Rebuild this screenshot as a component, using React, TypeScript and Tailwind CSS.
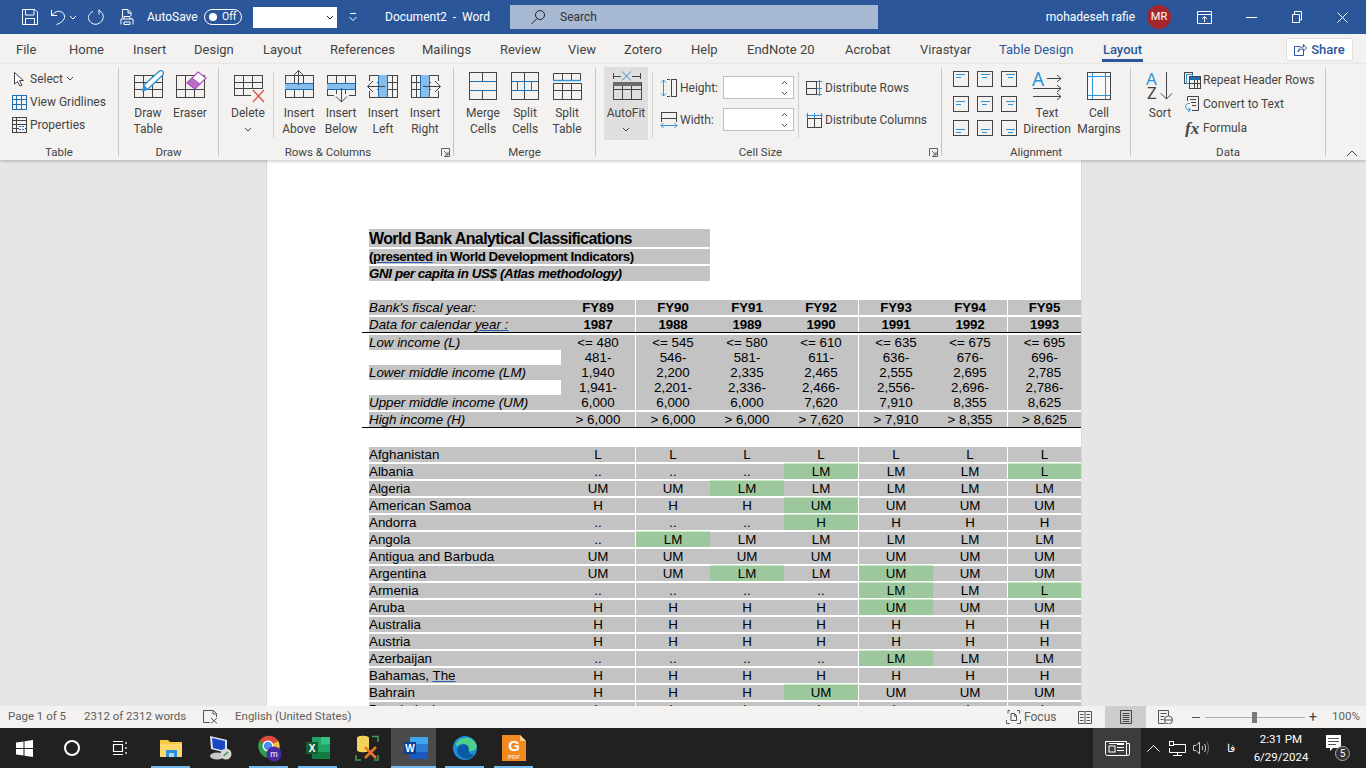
import type { ReactNode } from "react";

const DK = "#444444";
const BL = "#1f6fb4";
const LB = "#86bdea";
const SKY = "#2b94d8";

function Ico({ w = 36, h = 36, children }: { w?: number; h?: number; children: ReactNode }) {
  return (
    <svg width={w} height={h} viewBox={`0 0 ${w} ${h}`} fill="none" className="block shrink-0">
      {children}
    </svg>
  );
}

function Grid({ x, y, w, h, cols = [], rows = [], c = DK }: { x: number; y: number; w: number; h: number; cols?: number[]; rows?: number[]; c?: string }) {
  return (
    <g stroke={c}>
      <rect x={x + 0.5} y={y + 0.5} width={w} height={h} />
      {cols.map((v) => (
        <path key={"c" + v} d={`M${v + 0.5} ${y}V${y + h}`} />
      ))}
      {rows.map((v) => (
        <path key={"r" + v} d={`M${x} ${v + 0.5}H${x + w}`} />
      ))}
    </g>
  );
}

const DrawTableIcon = () => (
  <Ico>
    <Grid x={4} y={7} w={28} h={22} cols={[13, 22]} rows={[14, 21]} />
    <path d="M14 17 29 3.500a2.400 2.400 0 0 1 3.800 3.400L18 21l-5 2z" fill="#fff" stroke={SKY} strokeWidth="1.400" />
    <path d="M14 17l4 4-5 2z" fill={SKY} />
  </Ico>
);
const EraserIcon = () => (
  <Ico>
    <Grid x={4} y={7} w={28} h={22} cols={[13, 22]} rows={[21]} />
    <path d="M15 15 26 4l8 6-11 11z" fill="#fff" stroke="#a94fbd" strokeWidth="1.200" />
    <path d="M15 15l5-5 8 6-5 5z" fill="#b86bc9" stroke="#a94fbd" />
  </Ico>
);
const DeleteIcon = () => (
  <Ico>
    <Grid x={4} y={7} w={28} h={20} cols={[13, 22]} rows={[14, 20]} />
    <rect x="21" y="21" width="14" height="14" fill="#f3f2f1" />
    <path d="M23 22 34 34M34 22 23 34" stroke="#e8403c" strokeWidth="1.200" />
  </Ico>
);
const InsertAboveIcon = () => (
  <Ico>
    <Grid x={4} y={7} w={28} h={22} cols={[13, 22]} />
    <rect x="4" y="15" width="28" height="7" fill={LB} />
    <path d="M4 15.500H32M4 21.500H32" stroke={BL} />
    <rect x="10" y="1" width="15" height="6" fill="#f3f2f1" />
    <path d="M17.500 17V2.500M12 8l5.500-5.500L23 8" stroke={DK} />
  </Ico>
);
const InsertBelowIcon = () => (
  <Ico>
    <Grid x={4} y={7} w={28} h={20} cols={[13, 22]} />
    <rect x="4" y="15" width="28" height="7" fill={LB} />
    <path d="M4 15.500H32M4 21.500H32" stroke={BL} />
    <rect x="11" y="26" width="15" height="9" fill="#f3f2f1" />
    <path d="M18.500 20V34M13 28.500l5.500 5.500 5.500-5.500" stroke={DK} />
  </Ico>
);
const InsertLeftIcon = () => (
  <Ico>
    <Grid x={4} y={7} w={28} h={22} rows={[14, 21]} cols={[27]} />
    <rect x="13" y="7" width="9" height="22" fill={LB} />
    <path d="M13.500 7V29M22.500 7V29" stroke={BL} />
    <rect x="2" y="13" width="10" height="10" fill="#f3f2f1" />
    <path d="M20 18.500H2.500M8 13l-5.500 5.500L8 24" stroke={DK} />
  </Ico>
);
const InsertRightIcon = () => (
  <Ico>
    <Grid x={4} y={7} w={27} h={22} rows={[14, 21]} cols={[9]} />
    <rect x="13" y="7" width="9" height="22" fill={LB} />
    <path d="M13.500 7V29M22.500 7V29" stroke={BL} />
    <rect x="24" y="13" width="10" height="10" fill="#f3f2f1" />
    <path d="M16 18.500H33.500M28 13l5.500 5.500L28 24" stroke={DK} />
  </Ico>
);
const MergeIcon = () => (
  <Ico>
    <Grid x={4} y={4} w={27} h={27} />
    <path d="M17.500 4V13M17.500 22V31" stroke={DK} />
    <path d="M4 13.500H31M4 22.500H31" stroke={BL} />
  </Ico>
);
const SplitCellsIcon = () => (
  <Ico>
    <Grid x={4} y={4} w={27} h={27} />
    <path d="M17.500 4V13M17.500 22V31" stroke={DK} />
    <path d="M4 13.500H31M4 22.500H31M10.500 13V22M17.500 13V22M24.500 13V22" stroke={BL} />
  </Ico>
);
const SplitTableIcon = () => (
  <Ico>
    <path d="M4.500 12V5.500H31.500V12M13.500 5V12M22.500 5V12" stroke={DK} />
    <path d="M4 12.500H32" stroke={SKY} strokeWidth="1.400" />
    <Grid x={4} y={15} w={28} h={16} cols={[13, 22]} rows={[22]} />
  </Ico>
);
const AutoFitIcon = () => (
  <Ico>
    <path d="M5.500 5V11M5 8.500H13M32.500 5V11M24 8.500H33" stroke={DK} />
    <path d="M14 3.500 23 12.500M23 3.500 14 12.500" stroke={SKY} />
    <Grid x={5} y={14} w={28} h={17} cols={[14, 23]} rows={[21]} />
    <rect x="5" y="14" width="28" height="4" fill="#6b6b6b" />
  </Ico>
);
const HeightIcon = () => (
  <Ico w={18} h={20}>
    <path d="M3.500 2V18M1 4.500 3.500 2 6 4.500M1 15.500 3.500 18 6 15.500" stroke={SKY} />
    <path d="M7 1.500H10M7 18.500H10" stroke={DK} />
    <rect x="11.500" y="1.500" width="5" height="17" stroke={DK} />
  </Ico>
);
const WidthIcon = () => (
  <Ico w={18} h={18}>
    <rect x="1.500" y="1.500" width="15" height="6" stroke={DK} />
    <path d="M1.500 8V11M16.500 8V11" stroke={DK} />
    <path d="M1 14.500H17M3.500 12 1 14.500 3.500 17M14.500 12 17 14.500 14.500 17" stroke={SKY} />
  </Ico>
);
const DistRowsIcon = () => (
  <Ico w={17} h={16}>
    <rect x="0.500" y="1.500" width="10" height="13" stroke={DK} />
    <path d="M0 8.500H10" stroke={DK} />
    <path d="M13.500 0V16M11 1.500H16M11 8.500H16M11 14.500H16" stroke={SKY} />
  </Ico>
);
const DistColsIcon = () => (
  <Ico w={17} h={16}>
    <rect x="1.500" y="6.500" width="14" height="9" stroke={DK} />
    <path d="M8.500 6V16" stroke={DK} />
    <path d="M0 3.500H17M1.500 1V6M8.500 1V6M15.500 1V6" stroke={SKY} />
  </Ico>
);

function AlignIcon({ h, v }: { h: number; v: number }) {
  const x1 = h === 0 ? 3 : h === 1 ? 4 : 5;
  const x2 = h === 0 ? 10 : h === 1 ? 11 : 12;
  const x3 = h === 0 ? 3 : h === 1 ? 5 : 7;
  const x4 = h === 0 ? 8 : h === 1 ? 10 : 12;
  const y = v === 0 ? 3 : v === 1 ? 5 : 9;
  return (
    <Ico w={16} h={16}>
      <rect x="0.500" y="0.500" width="15" height="15" stroke={DK} />
      <path d={`M${x1} ${y + 0.5}H${x2 + 2}M${x3} ${y + 3.5}H${x4}`} stroke={SKY} />
    </Ico>
  );
}

const TextDirIcon = () => (
  <Ico w={30} h={36}>
    <text x="0" y="18" fontSize="19" fill={SKY} fontFamily="'Noto Sans', sans-serif">A</text>
    <path d="M15 10.500H29M25 7l4 3.500-4 3.500M1 20.500H29M25 17l4 3.500-4 3.500M1 28.500H29M25 25l4 3.500-4 3.500" stroke={DK} />
  </Ico>
);
const CellMarginsIcon = () => (
  <Ico w={26} h={36}>
    <rect x="1.500" y="4.500" width="23" height="27" stroke={DK} fill="#f9f9f9" />
    <path d="M6.500 5V31M19.500 5V31M2 8.500H24M2 27.500H24" stroke={SKY} />
  </Ico>
);
const SortIcon = () => (
  <Ico w={30} h={36}>
    <text x="1" y="17" fontSize="17" fill={SKY} fontFamily="'Noto Sans', sans-serif">A</text>
    <text x="2" y="31" fontSize="17" fill={DK} fontFamily="'Noto Sans', sans-serif">Z</text>
    <path d="M21.500 4V31M16 25.500l5.500 5.500 5.500-5.500" stroke={DK} />
  </Ico>
);
const RepeatIcon = () => (
  <Ico w={17} h={17}>
    <rect x="0.500" y="0.500" width="8" height="11" stroke={DK} />
    <rect x="2.500" y="2.500" width="6" height="9" stroke={SKY} />
    <rect x="5.500" y="4.500" width="11" height="12" stroke={DK} fill="#f3f2f1" />
    <rect x="6" y="5" width="10" height="3" fill={BL} />
    <path d="M6 11.500H16M10.500 8V16M13.500 8V16" stroke={DK} />
  </Ico>
);
const ConvertIcon = () => (
  <Ico w={17} h={17}>
    <path d="M3.500 5V0.500H14.500V14.500H8" stroke={DK} />
    <path d="M6 3.500H12M7 6.500H12M8 9.500H12" stroke={DK} />
    <path d="M6 7.500C2 6.500 0 11 3 13.500L6.500 14M4.500 11.500 6.500 14 4 16" stroke={SKY} />
  </Ico>
);
const FxIcon = () => (
  <Ico w={17} h={17}>
    <text x="1" y="14" fontSize="17" fontStyle="italic" fontWeight="700" fill={DK} fontFamily="'Liberation Serif', serif">fx</text>
  </Ico>
);
const Launcher = () => (
  <Ico w={9} h={9}>
    <path d="M0.500 8V0.500H8.500V8.500H3M3 3l4 4M4 7h3V4" stroke="#605e5c" />
  </Ico>
);
const Chevron = ({ c = "#444" }: { c?: string }) => (
  <Ico w={8} h={5}>
    <path d="M1 1l3 3 3-3" stroke={c} />
  </Ico>
);

function BigBtn({ icon, lines, w = "w-[42px]", chevron }: { icon: ReactNode; lines: string[]; w?: string; chevron?: boolean }) {
  return (
    <div className={`flex shrink-0 flex-col items-center ${w}`}>
      <div className="flex h-[37px] w-full justify-center">{icon}</div>
      {lines.map((l) => (
        <span key={l} className="whitespace-nowrap text-center leading-[16px]">{l}</span>
      ))}
      {chevron && <div className="mt-[6px]"><Chevron /></div>}
    </div>
  );
}

function Group({ w, label, launcher, children }: { w: string; label: string; launcher?: boolean; children: ReactNode }) {
  return (
    <div className={`relative flex h-[88px] shrink-0 flex-col border-r border-[#c8c6c4] ${w}`}>
      <div className="flex h-[76px] shrink-0 items-start">{children}</div>
      <div className={`h-[16px] shrink-0 whitespace-nowrap text-center text-[11.5px] leading-[16px] ${launcher ? "pr-[16px]" : ""}`}>{label}</div>
      {launcher && <div className="absolute bottom-[-1px] right-[3px]"><Launcher /></div>}
    </div>
  );
}

const VSep = ({ cls }: { cls: string }) => <div className={`h-[66px] w-px shrink-0 bg-[#d2d0ce] ${cls}`} />;

function SizeInput() {
  return (
    <div className="flex h-[23px] w-[71px] items-center justify-end border border-[#c0bfbe] bg-white pr-[4px]">
      <Ico w={9} h={18}>
        <path d="M2 5l2.500-2.500L7 5M2 13l2.500 2.500L7 13" stroke="#444" />
      </Ico>
    </div>
  );
}

function Ribbon() {
  return (
    <div className="relative z-10 flex h-[96px] shrink-0 bg-[#f3f2f1] pt-[4px] text-[12px] text-[#444] shadow-[0_1px_3px_rgba(0,0,0,0.25)]">
      <Group w="w-[119px]" label="Table">
        <div className="-mt-px flex flex-col pl-[11px]">
          <div className="flex h-[23px] items-center gap-[3px]">
            <Ico w={16} h={16}>
              <path d="M3.500 1.500V13l3-2.500 2.500 4.500 2-1-2.500-4.500 4 0z" stroke={DK} fill="#fff" />
            </Ico>
            <span>Select</span>
            <Chevron />
          </div>
          <div className="flex h-[23px] items-center gap-[3px]">
            <Ico w={16} h={16}>
              <Grid x={1} y={1} w={14} h={14} cols={[5, 10]} rows={[5, 10]} c={BL} />
            </Ico>
            <span className="whitespace-nowrap">View Gridlines</span>
          </div>
          <div className="flex h-[23px] items-center gap-[3px]">
            <Ico w={16} h={16}>
              <Grid x={1} y={0} w={14} h={15} cols={[5]} rows={[3, 7, 11]} />
              <rect x="8" y="8" width="6" height="6" fill="#f3f2f1" />
              <path d="M8 9.500h2M11 9.500h2M8 12.500h2M11 12.500h2" stroke={BL} />
            </Ico>
            <span>Properties</span>
          </div>
        </div>
      </Group>
      <Group w="w-[100px]" label="Draw">
        <div className="flex pl-[8px]">
          <BigBtn icon={<DrawTableIcon />} lines={["Draw", "Table"]} />
          <BigBtn icon={<EraserIcon />} lines={["Eraser"]} />
        </div>
      </Group>
      <Group w="w-[235px]" label="Rows & Columns" launcher>
        <div className="flex pl-[8px]">
          <BigBtn icon={<DeleteIcon />} lines={["Delete"]} chevron />
          <VSep cls="ml-[4px] mr-[4px] mt-[4px]" />
          <BigBtn icon={<InsertAboveIcon />} lines={["Insert", "Above"]} />
          <BigBtn icon={<InsertBelowIcon />} lines={["Insert", "Below"]} />
          <BigBtn icon={<InsertLeftIcon />} lines={["Insert", "Left"]} />
          <BigBtn icon={<InsertRightIcon />} lines={["Insert", "Right"]} />
        </div>
      </Group>
      <Group w="w-[142px]" label="Merge">
        <div className="flex pl-[8px]">
          <BigBtn icon={<MergeIcon />} lines={["Merge", "Cells"]} />
          <BigBtn icon={<SplitCellsIcon />} lines={["Split", "Cells"]} />
          <BigBtn icon={<SplitTableIcon />} lines={["Split", "Table"]} />
        </div>
      </Group>
      <Group w="w-[346px]" label="Cell Size" launcher>
        <div className="flex pl-[8px]">
          <div className="-mt-px h-[73px] w-[44px] shrink-0 bg-[#e1dfdd] pt-px">
            <BigBtn icon={<AutoFitIcon />} lines={["AutoFit"]} w="w-[44px]" chevron />
          </div>
          <VSep cls="ml-[4px] mt-[4px]" />
          <div className="ml-[7px] mt-[8px] flex w-[134px] shrink-0 flex-col gap-[9px]">
            <div className="flex h-[23px] items-center">
              <div className="w-[20px]"><HeightIcon /></div>
              <span className="w-[43px]">Height:</span>
              <SizeInput />
            </div>
            <div className="flex h-[23px] items-center">
              <div className="w-[20px]"><WidthIcon /></div>
              <span className="w-[43px]">Width:</span>
              <SizeInput />
            </div>
          </div>
          <VSep cls="ml-[4px] mt-[4px]" />
          <div className="ml-[7px] mt-[8px] flex flex-col gap-[9px]">
            <div className="flex h-[23px] items-center gap-[2px]"><DistRowsIcon /><span className="whitespace-nowrap">Distribute Rows</span></div>
            <div className="flex h-[23px] items-center gap-[2px]"><DistColsIcon /><span className="whitespace-nowrap">Distribute Columns</span></div>
          </div>
        </div>
      </Group>
      <Group w="w-[189px]" label="Alignment">
        <div className="flex pl-[11px]">
          <div className="mt-[3px] grid shrink-0 grid-cols-[16px_16px_16px] gap-x-[8px] gap-y-[8px]">
            {[0, 1, 2].map((v) => [0, 1, 2].map((h) => <AlignIcon key={`${v}-${h}`} h={h} v={v} />))}
          </div>
          <div className="ml-[5px]"><BigBtn icon={<TextDirIcon />} lines={["Text", "Direction"]} w="w-[50px]" /></div>
          <BigBtn icon={<CellMarginsIcon />} lines={["Cell", "Margins"]} w="w-[54px]" />
        </div>
      </Group>
      <Group w="w-[195px]" label="Data">
        <div className="flex pl-[8px]">
          <BigBtn icon={<SortIcon />} lines={["Sort"]} />
          <div className="ml-[3px] mt-[4px] flex flex-col gap-[8px]">
            <div className="flex h-[16px] items-center gap-[2px]"><RepeatIcon /><span className="whitespace-nowrap">Repeat Header Rows</span></div>
            <div className="flex h-[16px] items-center gap-[2px]"><ConvertIcon /><span className="whitespace-nowrap">Convert to Text</span></div>
            <div className="flex h-[16px] items-center gap-[2px]"><FxIcon /><span>Formula</span></div>
          </div>
        </div>
      </Group>
      <div className="flex flex-1 items-end justify-end pb-[3px] pr-[8px]">
        <Ico w={12} h={8}><path d="M1 7l5-5 5 5" stroke="#444" /></Ico>
      </div>
    </div>
  );
}

function TitleBar() {
  return (
    <div className="flex h-[34px] shrink-0 items-center bg-[#2b579a] pl-[22px] pr-[18px] text-[12px] text-white">
      <Ico w={16} h={16}>
        <path d="M0.500 0.500H13L15.500 3V15.500H0.500zM3.500 1V6H12V1M3.500 15V9.500H12.500V15" stroke="#fff" />
      </Ico>
      <div className="ml-[12px]">
        <Ico w={16} h={16}>
          <path d="M1.500 1V6.500H7M1.500 6.500 5 3.500C8 1 14 2.500 14.500 7 15 11 11 14 6.500 15.500" stroke="#fff" />
        </Ico>
      </div>
      <div className="ml-[3px]"><Chevron c="#fff" /></div>
      <div className="ml-[11px]">
        <Ico w={16} h={16}>
          <path d="M5 2.500C1.500 4 0 7 0.500 9.500 1.500 14 6 16 9.500 15 14 13.500 16 9 15 6 14.500 4 13 2.500 11 1.500M11 0.500V5.500" stroke="#fff" />
        </Ico>
      </div>
      <div className="ml-[16px]">
        <Ico w={14} h={16}>
          <path d="M2.500 9V0.500H8L11 3.500V7M8 1V4H11M1 15.500V10H13V15.500M4 13H10V15.500H4zM4 10V7.500H10V10" stroke="#fff" />
        </Ico>
      </div>
      <span className="ml-[13px] w-[50px] whitespace-nowrap">AutoSave</span>
      <div className="ml-[7px] flex h-[16px] w-[38px] items-center rounded-full border border-white pl-[4px]">
        <div className="h-[8px] w-[8px] rounded-full bg-white" />
        <span className="ml-[5px] text-[10.5px] leading-none">Off</span>
      </div>
      <div className="ml-[11px] flex h-[21px] w-[84px] items-center justify-end bg-white pr-[3px]"><Chevron c="#222" /></div>
      <div className="ml-[11px]">
        <Ico w={10} h={10}><path d="M2 1.500H8M1.500 5l3.500 3.500L8.500 5" stroke="#fff" /></Ico>
      </div>
      <span className="ml-[27px] w-[108px] whitespace-nowrap">Document2&nbsp; -&nbsp; Word</span>
      <div className="ml-[17px] flex h-[24px] w-[368px] items-center bg-[#a6b8d2] pl-[20px] text-[#333]">
        <Ico w={16} h={16}>
          <circle cx="10" cy="6" r="4.500" stroke="#222" />
          <path d="M7 9.500 1.500 15" stroke="#222" />
        </Ico>
        <span className="ml-[14px]">Search</span>
      </div>
      <span className="ml-auto whitespace-nowrap">mohadeseh rafie</span>
      <div className="ml-[12px] flex h-[24px] w-[24px] items-center justify-center rounded-full bg-[#a4262c] text-[11px]">MR</div>
      <div className="ml-[26px]">
        <Ico w={15} h={13}><path d="M0.500 0.500H14.500V12.500H0.500zM1 3.500H14M7.500 11V6M5 8l2.500-2.500L10 8" stroke="#fff" /></Ico>
      </div>
      <div className="ml-[34px] h-px w-[11px] bg-white" />
      <div className="ml-[35px]">
        <Ico w={10} h={12}><path d="M0.500 3.500H7.500V11.500H0.500zM2.500 3V0.500H9.500V9H8" stroke="#fff" /></Ico>
      </div>
      <div className="ml-[35px]">
        <Ico w={11} h={11}><path d="M0.500 0.500 10.500 10.500M10.500 0.500 0.500 10.500" stroke="#fff" /></Ico>
      </div>
    </div>
  );
}

const tabs: [string, string][] = [
  ["File", "w-[53px]"], ["Home", "w-[64px]"], ["Insert", "w-[61px]"], ["Design", "w-[69px]"], ["Layout", "w-[67px]"],
  ["References", "w-[92px]"], ["Mailings", "w-[78px]"], ["Review", "w-[68px]"], ["View", "w-[56px]"], ["Zotero", "w-[67px]"],
  ["Help", "w-[56px]"], ["EndNote 20", "w-[98px]"], ["Acrobat", "w-[75px]"], ["Virastyar", "w-[79px]"],
];

function TabBar() {
  return (
    <div className="flex h-[30px] shrink-0 items-center bg-[#f3f2f1] pl-[16px] pr-[13px] pt-px text-[13px] text-[#444]">
      {tabs.map(([t, w]) => (
        <span key={t} className={`shrink-0 whitespace-nowrap ${w}`}>{t}</span>
      ))}
      <span className="w-[103px] shrink-0 whitespace-nowrap text-[#2b579a]">Table Design</span>
      <span className="relative flex h-full w-[41px] shrink-0 items-center justify-center font-medium text-[#2b579a]">
        Layout
        <span className="absolute bottom-[2px] left-0 h-[3px] w-full bg-[#2b579a]" />
      </span>
      <div className="ml-auto flex h-[23px] w-[67px] items-center justify-center gap-[4px] rounded-[2px] border border-[#e1dfdd] bg-white font-medium text-[#2b579a]">
        <Ico w={13} h={13}><path d="M6 3.500H0.500V12.500H9.500V8M4 9C4 5 7 4 9.500 4V1.500L12.500 5 9.500 8V6C7.500 6 5 6.500 4 9z" stroke="#2b579a" /></Ico>
        <span>Share</span>
      </div>
    </div>
  );
}

const colW = [
  "w-[75px] border-r border-white",
  "w-[74px]",
  "w-[74px]",
  "w-[75px] border-r border-white",
  "w-[74px]",
  "w-[75px] border-r border-white",
  "w-[73px]",
];

function Row({ label, values, blank, italic, bold, labelNode, gap = true }: { label?: string; values: string[]; blank?: boolean; italic?: boolean; bold?: boolean; labelNode?: ReactNode; gap?: boolean }) {
  return (
    <div className={`flex h-[15px] leading-[15px] ${gap ? "mb-[2px]" : ""}`}>
      <div className={`w-[192px] shrink-0 whitespace-nowrap ${blank ? "bg-white" : "bg-[#c3c3c3]"} ${italic ? "italic" : ""}`}>
        {labelNode ?? label}
      </div>
      {values.map((v, i) => {
        const green = v.startsWith("*");
        return (
          <div
            key={i}
            className={`shrink-0 text-center ${colW[i]} ${green ? "bg-[#9dc89d] shadow-[0_-1px_0_#c9ecc4]" : "bg-[#c3c3c3]"} ${bold ? "font-bold tracking-[-0.1px]" : ""}`}
          >
            {green ? v.slice(1) : v}
          </div>
        );
      })}
    </div>
  );
}

const countries: [string, string][] = [
  ["Afghanistan", "L L L L L L L"],
  ["Albania", ".. .. .. *LM LM LM *L"],
  ["Algeria", "UM UM *LM LM LM LM LM"],
  ["American Samoa", "H H H *UM UM UM UM"],
  ["Andorra", ".. .. .. *H H H H"],
  ["Angola", ".. *LM LM LM LM LM LM"],
  ["Antigua and Barbuda", "UM UM UM UM UM UM UM"],
  ["Argentina", "UM UM *LM LM *UM UM UM"],
  ["Armenia", ".. .. .. .. *LM LM *L"],
  ["Aruba", "H H H H *UM UM UM"],
  ["Australia", "H H H H H H H"],
  ["Austria", "H H H H H H H"],
  ["Azerbaijan", ".. .. .. .. *LM LM LM"],
  ["Bahamas, The", "H H H H H H H"],
  ["Bahrain", "H H H *UM UM UM UM"],
  ["Bangladesh", "L L L L L L L"],
];

function Page() {
  return (
    <div className="ml-[267px] h-full w-[814px] bg-white pl-[102px] pt-[69px] font-['Liberation_Sans',Arial,sans-serif] text-[13.33px] text-black shadow-[0_0_1px_#999]">
      <div className="flex h-[18px] w-[341px] items-center bg-[#c3c3c3] pt-px text-[16px] font-bold tracking-[-0.61px]">World Bank Analytical Classifications</div>
      <div className="mt-[2px] flex h-[15px] w-[341px] items-center whitespace-pre bg-[#c3c3c3] font-bold tracking-[-0.45px]">
        (<span className="underline decoration-[#2a5bb5]">presented</span> in World Development Indicators)
      </div>
      <div className="mb-[19px] mt-[2px] flex h-[15px] w-[341px] items-center bg-[#c3c3c3] font-bold italic tracking-[-0.38px]">GNI per capita in US$ (Atlas methodology)</div>

      <Row label="Bank's fiscal year:" italic bold values={["FY89", "FY90", "FY91", "FY92", "FY93", "FY94", "FY95"]} />
      <Row
        italic
        bold
        gap={false}
        labelNode={<span>Data for calendar <span className="underline decoration-[#2a5bb5]">year :</span></span>}
        values={["1987", "1988", "1989", "1990", "1991", "1992", "1993"]}
      />
      <div className="-ml-[7px] mb-[2px] h-px w-[719px] bg-black" />
      <Row label="Low income (L)" italic gap={false} values={["<= 480", "<= 545", "<= 580", "<= 610", "<= 635", "<= 675", "<= 695"]} />
      <Row blank gap={false} values={["481-", "546-", "581-", "611-", "636-", "676-", "696-"]} />
      <Row label="Lower middle income (LM)" italic gap={false} values={["1,940", "2,200", "2,335", "2,465", "2,555", "2,695", "2,785"]} />
      <Row blank gap={false} values={["1,941-", "2,201-", "2,336-", "2,466-", "2,556-", "2,696-", "2,786-"]} />
      <Row label="Upper middle income (UM)" italic values={["6,000", "6,000", "6,000", "7,620", "7,910", "8,355", "8,625"]} />
      <Row label="High income (H)" italic gap={false} values={["> 6,000", "> 6,000", "> 6,000", "> 7,620", "> 7,910", "> 8,355", "> 8,625"]} />
      <div className="-ml-[7px] mb-[19px] h-px w-[719px] bg-black" />

      {countries.map(([name, vals]) => (
        <Row
          key={name}
          labelNode={name === "Bahamas, The" ? <>Bahamas, <span className="underline decoration-[#2a5bb5]">The</span></> : name}
          values={vals.split(" ")}
        />
      ))}
    </div>
  );
}

function StatusBar() {
  return (
    <div className="relative z-10 flex h-[22px] shrink-0 items-center bg-[#f3f2f1] pl-[8px] text-[11.5px] text-[#605e5c]">
      <span className="w-[76px] whitespace-nowrap">Page 1 of 5</span>
      <span className="w-[119px] whitespace-nowrap">2312 of 2312 words</span>
      <Ico w={15} h={14}>
        <path d="M7 12.500H0.500V0.500H10.500L13.500 3.500V7M10 1V4H13M8 8l6 5.500M14 8l-6 5.500" stroke="#555" />
      </Ico>
      <span className="ml-[17px] whitespace-nowrap">English (United States)</span>
      <div className="ml-auto flex h-full items-center">
        <Ico w={15} h={14}>
          <path d="M2 3.500V0.500H4M11 0.500H13.500V3.500M0.500 10V13.500H4M11 13.500H14.500V10M5 3.500H8.500L10.500 5.500V10.500H5zM8.500 4V6H10.500" stroke="#555" />
        </Ico>
        <span className="ml-[3px] w-[54px] text-[12px]">Focus</span>
        <Ico w={14} h={13}>
          <path d="M0.500 0.500H6.500L7 1 7.500 0.500H13.500V12.500H7.500L7 12 6.500 12.500H0.500zM7 1V12M2 3.500H5.500M2 6.500H5.500M2 9.500H5.500M8.500 3.500H12M8.500 6.500H12M8.500 9.500H12" stroke="#555" />
        </Ico>
        <div className="ml-[13px] flex h-full w-[41px] items-center justify-center bg-[#cfcdcb]">
          <Ico w={12} h={14}>
            <path d="M0.500 0.500H11.500V13.500H0.500zM2.500 3.500H9.500M2.500 5.500H9.500M2.500 7.500H9.500M2.500 9.500H9.500M2.500 11.500H9.500" stroke="#444" />
          </Ico>
        </div>
        <div className="ml-[12px]">
          <Ico w={15} h={14}>
            <path d="M7 13.500H0.500V0.500H10.500V6M2.500 3.500H8.500M2.500 6.500H6.500M2.500 9.500H5.500" stroke="#555" />
            <circle cx="10.500" cy="10" r="4" stroke="#555" fill="#f3f2f1" />
            <path d="M6.500 10H14.500" stroke="#555" />
          </Ico>
        </div>
        <div className="ml-[19px] h-px w-[8px] bg-[#555]" />
        <div className="relative ml-[5px] flex h-[10px] w-[100px] items-center justify-center">
          <div className="h-px w-full bg-[#b0aeac]" />
          <div className="absolute left-[47px] top-0 h-[11px] w-[5px] bg-[#7a7876]" />
        </div>
        <span className="ml-[4px] w-[9px] text-[14px] leading-none text-[#444]">+</span>
        <span className="ml-[14px] mr-[8px] w-[26px] whitespace-nowrap">100%</span>
      </div>
    </div>
  );
}

function Slot({ children, open = true, active }: { children: ReactNode; open?: boolean; active?: boolean }) {
  return (
    <div className="relative flex h-full w-[49px] shrink-0 items-center justify-center">
      {active && <div className="absolute inset-y-0 left-0 right-[4px] bg-[#4b4b4b]" />}
      <div className="relative">{children}</div>
      {open && <div className={`absolute bottom-0 h-[2px] bg-[#76b9ed] ${active ? "left-0 right-[4px]" : "inset-x-[5px]"}`} />}
    </div>
  );
}

function Taskbar() {
  return (
    <div className="flex h-[40px] shrink-0 items-center bg-[#212121] text-white">
      <div className="ml-[16px]">
        <Ico w={17} h={17}>
          <path d="M0 2.500 7.500 1.500V8H0zM8.500 1.300 17 0V8H8.500zM0 9H7.500V15.500L0 14.500zM8.500 9H17V17L8.500 15.700z" fill="#fff" />
        </Ico>
      </div>
      <div className="ml-[31px] h-[16px] w-[16px] rounded-full border-[2.5px] border-white" />
      <div className="ml-[32px]">
        <Ico w={16} h={16}>
          <path d="M1 1.500H11M1 14.500H11M1.500 4.500H10.500V11.500H1.500zM14 2V4M14 7V9M14 12V14" stroke="#fff" strokeWidth="1.200" />
        </Ico>
      </div>
      <div className="ml-[18px] flex h-full">
        <Slot>
          <Ico w={22} h={20}>
            <path d="M0 2H8L10 4H22V18H0z" fill="#f7c841" />
            <rect x="0" y="6" width="22" height="13" fill="#fcd96b" />
            <rect x="6" y="12" width="11" height="7" fill="#2b90d9" />
            <rect x="9" y="15" width="5" height="4" fill="#a7d5f2" />
          </Ico>
        </Slot>
        <Slot open={false}>
          <Ico w={24} h={26}>
            <path d="M2 1 19 5V18L3 14z" fill="#dfe3e8" />
            <path d="M4 3 17 6V16L5 13z" fill="#1b46c4" />
            <ellipse cx="9" cy="21" rx="7" ry="3.500" fill="#c7c7c7" />
            <circle cx="18" cy="19" r="5.500" fill="#d5d9d5" />
            <path d="M15.500 21 20 17" stroke="#3f8f4f" strokeWidth="1.500" />
          </Ico>
        </Slot>
        <Slot>
          <Ico w={26} h={28}>
            <path d="M12 12 3.300 7A11.500 11.500 0 0 1 22.500 7z" fill="#dd4b3e" />
            <path d="M12 12 22.500 7A12 12 0 0 1 13 24z" fill="#f5c33b" />
            <path d="M3.300 7A12 12 0 0 0 13 24L16 14z" fill="#2f9e4f" />
            <circle cx="12" cy="12" r="5.500" fill="#fff" />
            <circle cx="12" cy="12" r="4.200" fill="#4a8df0" />
            <circle cx="18" cy="20" r="7.500" fill="#4a2aa0" />
            <text x="18" y="23" textAnchor="middle" fontSize="9" fill="#fff" fontFamily="'Liberation Sans', sans-serif">m</text>
          </Ico>
        </Slot>
        <Slot>
          <Ico w={24} h={22}>
            <rect x="6" y="0" width="18" height="22" fill="#21a366" />
            <rect x="15" y="0" width="9" height="7.500" fill="#33c481" />
            <rect x="6" y="15" width="18" height="7" fill="#107c41" />
            <rect x="0" y="5" width="12" height="12" fill="#185c37" />
            <text x="6" y="15" textAnchor="middle" fontSize="10" fontWeight="700" fill="#fff" fontFamily="'Liberation Sans', sans-serif">X</text>
          </Ico>
        </Slot>
        <Slot open={false}>
          <Ico w={24} h={26}>
            <path d="M2 3C2 0 14 0 14 3V15C14 18 2 18 2 15z" fill="#f3d35a" />
            <path d="M17 1.500H23V7M1 20V25H6M19 25H23V20" stroke="#3f9a4e" strokeWidth="1.500" />
            <path d="M10 12 21 23M21 12 10 23" stroke="#e8762b" strokeWidth="2.500" />
          </Ico>
        </Slot>
        <Slot active>
          <Ico w={24} h={22}>
            <rect x="6" y="0" width="18" height="22" rx="1" fill="#41a5ee" />
            <rect x="6" y="7" width="18" height="8" fill="#2b7cd3" />
            <rect x="6" y="15" width="18" height="7" fill="#185abd" />
            <rect x="0" y="5" width="12" height="12" fill="#103f91" />
            <text x="6" y="15" textAnchor="middle" fontSize="10" fontWeight="700" fill="#fff" fontFamily="'Liberation Sans', sans-serif">W</text>
          </Ico>
        </Slot>
        <Slot>
          <Ico w={24} h={24}>
            <circle cx="12" cy="12" r="12" fill="#1b8fd8" />
            <path d="M3 8C6 0 20-1 23.500 9 24.500 14 20 16 15 15 17 11 13 7 8 8 5 9 3 12 3 8z" fill="#4fd18b" />
            <path d="M4 14C5 9 11 7 15 10 17 13 14 17 18 18 20 19 21 19 21 19 17 25 5 24 4 14z" fill="#0c59a4" />
          </Ico>
        </Slot>
        <Slot>
          <Ico w={24} h={26}>
            <path d="M0 0H18L24 6V26H0z" fill="#f28a20" />
            <path d="M18 0 24 6H18z" fill="#fbd19a" />
            <text x="12" y="16" textAnchor="middle" fontSize="15" fontWeight="700" fill="#fff" fontFamily="'Liberation Sans', sans-serif">G</text>
            <text x="12" y="24" textAnchor="middle" fontSize="6" fontWeight="700" fill="#fde3c0" fontFamily="'Liberation Sans', sans-serif">PDF</text>
          </Ico>
        </Slot>
      </div>
      <div className="ml-auto flex h-full items-center">
        <div className="flex h-full w-[48px] items-center justify-center bg-[#3c3c3c]">
          <Ico w={25} h={17}>
            <path d="M0.500 1.500H21.500V15.500H2.500a2 2 0 0 1-2-2zM21.500 3.500H24.500V14a1.500 1.500 0 0 1-3 0" stroke="#fff" />
            <rect x="4" y="6" width="6" height="6" stroke="#fff" />
            <path d="M12 4.500H19M12 7.500H19M12 10.500H19M4 3.500H19" stroke="#fff" />
          </Ico>
        </div>
        <div className="ml-[6px]">
          <Ico w={13} h={8}><path d="M0.500 7.500l6-6 6 6" stroke="#fff" /></Ico>
        </div>
        <div className="ml-[9px]">
          <Ico w={17} h={15}>
            <path d="M3.500 3.500H16.500V11.500H0.500V7M8.500 12V14.500M4 14.500H13" stroke="#fff" />
            <rect x="0.500" y="0.500" width="4" height="4" stroke="#fff" fill="#212121" />
          </Ico>
        </div>
        <div className="ml-[7px]">
          <Ico w={17} h={14}>
            <path d="M0.500 4.500H3L6.500 1V13L3 9.500H0.500z" stroke="#ccc" />
            <path d="M9 5C10 6 10 8 9 9M11.500 3C13 5.500 13 8.500 11.500 11" stroke="#ccc" />
            <path d="M14 1C16 5 16 9 14 13" stroke="#777" />
          </Ico>
        </div>
        <span className="ml-[17px] w-[9px] font-['Noto_Sans',sans-serif] text-[11px]">فا</span>
        <div className="ml-[14px] flex w-[62px] flex-col items-center text-[11.5px] leading-[18px]">
          <span>2:31 PM</span>
          <span>6/29/2024</span>
        </div>
        <div className="relative ml-[13px] mr-[16px] h-[26px] w-[25px]">
          <Ico w={20} h={18}>
            <path d="M1 0H16V13H8L5 16V13H1z" fill="#fff" />
            <path d="M3 3.500H14M3 6.500H14M3 9.500H11" stroke="#555" />
          </Ico>
          <div className="absolute bottom-0 right-0 flex h-[15px] w-[15px] items-center justify-center rounded-full border border-[#aaa] bg-[#333] text-[10px]">5</div>
        </div>
      </div>
    </div>
  );
}

export default function App() {
  return (
    <div className="flex h-screen w-[1366px] flex-col overflow-hidden bg-[#e6e6e6] font-['Roboto',sans-serif]">
      <TitleBar />
      <TabBar />
      <Ribbon />
      <div className="min-h-0 flex-1 overflow-hidden">
        <Page />
      </div>
      <StatusBar />
      <Taskbar />
    </div>
  );
}
